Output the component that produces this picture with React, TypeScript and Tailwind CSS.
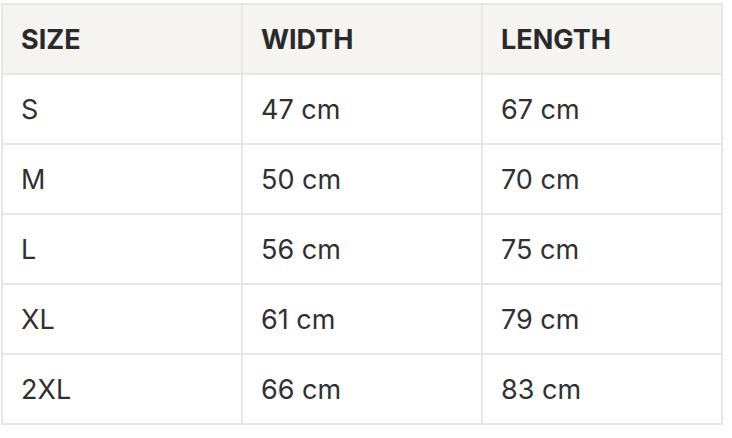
const rows = [
  ["S", "47 cm", "67 cm"],
  ["M", "50 cm", "70 cm"],
  ["L", "56 cm", "75 cm"],
  ["XL", "61 cm", "79 cm"],
  ["2XL", "66 cm", "83 cm"],
];

export default function App() {
  return (
    <div className="w-[732px] h-[438px] bg-white pt-[3px] pl-[1px]" style={{ fontFamily: 'Inter, "Liberation Sans", sans-serif' }}>
      <table className="border-collapse border-2 border-[#e6e6e6] text-[27px] text-[#303030]">
        <thead>
          <tr className="bg-[#f5f4f1]">
            {["SIZE", "WIDTH", "LENGTH"].map((h) => (
              <th key={h} className="w-[240px] h-[70px] border-2 border-[#e6e6e6] pl-[18px] pt-[3px] text-left font-bold text-[#2a2a2a]">
                {h}
              </th>
            ))}
          </tr>
        </thead>
        <tbody>
          {rows.map((r) => (
            <tr key={r[0]}>
              {r.map((c, i) => (
                <td key={i} className="w-[240px] h-[70px] border-2 border-[#e6e6e6] pl-[18px] pt-[3px]">
                  {c}
                </td>
              ))}
            </tr>
          ))}
        </tbody>
      </table>
    </div>
  );
}
